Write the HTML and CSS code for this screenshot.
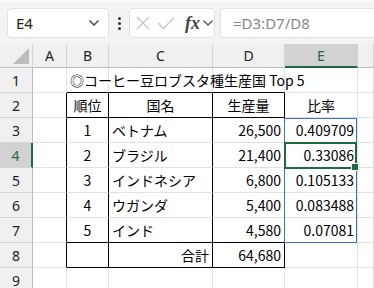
FILE: index.html
```html
<!DOCTYPE html>
<html lang="ja">

<head>
    <meta charset="UTF-8">
    <meta name="viewport" content="width=device-width, initial-scale=1.0">
    <title>コーヒー豆 生産国</title>
    <link rel="stylesheet" href="styles.css">
</head>

<body>

    <div class="toolbar">
        <div class="namebox">
            <span>E4</span>
            <svg class="chev" width="12" height="8" viewBox="0 0 12 8"><path d="M1.5 1.5 L6 6 L10.5 1.5" fill="none" stroke="#444" stroke-width="1.4"/></svg>
        </div>
        <div class="dots"><i></i><i></i><i></i></div>
        <div class="fxbox">
            <svg width="14" height="14" viewBox="0 0 14 14"><path d="M1 1 L13 13 M13 1 L1 13" stroke="#c6c6c6" stroke-width="1.3"/></svg>
            <svg width="18" height="14" viewBox="0 0 18 14"><path d="M1 7 L6.5 12.5 L17 1.5" fill="none" stroke="#c6c6c6" stroke-width="1.3"/></svg>
            <span class="fx">fx</span>
            <svg width="12" height="8" viewBox="0 0 12 8"><path d="M1.5 1.5 L6 6 L10.5 1.5" fill="none" stroke="#555" stroke-width="1.3"/></svg>
        </div>
        <div class="formula">=D3:D7/D8</div>
    </div>

    <div class="sheet">
        <div class="hd corner"><span class="tri"></span></div>
        <div class="hd">A</div>
        <div class="hd">B</div>
        <div class="hd">C</div>
        <div class="hd">D</div>
        <div class="hd sel">E</div>
        <div class="hd"></div>

        <div class="rh">1</div>
        <div class="c"></div>
        <div class="c bb title"><span>◎コーヒー豆ロブスタ種生産国 Top 5</span></div>
        <div class="c bb"></div>
        <div class="c bb"></div>
        <div class="c"></div>
        <div class="c"></div>

        <div class="rh">2</div>
        <div class="c br"></div>
        <div class="c br bb mid">順位</div>
        <div class="c br bb mid">国名</div>
        <div class="c br bb mid">生産量</div>
        <div class="c mid">比率</div>
        <div class="c"></div>

        <div class="rh">3</div>
        <div class="c br"></div>
        <div class="c br mid">1</div>
        <div class="c br">ベトナム</div>
        <div class="c br num">26,500</div>
        <div class="c num">0.409709</div>
        <div class="c"></div>

        <div class="rh rsel">4</div>
        <div class="c br"></div>
        <div class="c br mid">2</div>
        <div class="c br">ブラジル</div>
        <div class="c br num">21,400</div>
        <div class="c num">0.33086</div>
        <div class="c"></div>

        <div class="rh">5</div>
        <div class="c br"></div>
        <div class="c br mid">3</div>
        <div class="c br">インドネシア</div>
        <div class="c br num">6,800</div>
        <div class="c num">0.105133</div>
        <div class="c"></div>

        <div class="rh">6</div>
        <div class="c br"></div>
        <div class="c br mid">4</div>
        <div class="c br">ウガンダ</div>
        <div class="c br num">5,400</div>
        <div class="c num">0.083488</div>
        <div class="c"></div>

        <div class="rh">7</div>
        <div class="c br"></div>
        <div class="c br bb mid">5</div>
        <div class="c br bb">インド</div>
        <div class="c br bb num">4,580</div>
        <div class="c num">0.07081</div>
        <div class="c"></div>

        <div class="rh">8</div>
        <div class="c br"></div>
        <div class="c br bb"></div>
        <div class="c br bb num">合計</div>
        <div class="c br bb num">64,680</div>
        <div class="c"></div>
        <div class="c"></div>

        <div class="rh">9</div>
        <div class="c"></div>
        <div class="c"></div>
        <div class="c"></div>
        <div class="c"></div>
        <div class="c"></div>
        <div class="c"></div>

        <div class="range"></div>
        <div class="active"><span class="handle"></span></div>
    </div>

</body>

</html>
```

FILE: styles.css
```css
body {
    margin: 0;
    width: 374px;
    height: 288px;
    overflow: hidden;
    background-color: #fff;
    font-family: "Noto Sans CJK JP", "Noto Sans", sans-serif;
    color: #000;
}

.toolbar {
    height: 44px;
    background-color: #f3f3f3;
    border-top: 2px solid #fafafa;
    box-sizing: border-box;
    display: flex;
    align-items: center;
    padding-left: 7px;
}

.namebox {
    width: 102px;
    height: 30px;
    box-sizing: border-box;
    background-color: #fff;
    border: 1px solid #e2e2e2;
    border-radius: 4px;
    display: flex;
    align-items: center;
    justify-content: space-between;
    padding: 0 8px 0 8px;
    font-family: "Noto Sans", sans-serif;
    font-size: 15px;
    color: #222;
}

.dots {
    width: 20px;
    display: flex;
    flex-direction: column;
    align-items: center;
    gap: 2px;
}

.dots i {
    width: 3px;
    height: 3px;
    border-radius: 50%;
    background-color: #333;
}

.fxbox {
    width: 86px;
    height: 30px;
    box-sizing: border-box;
    background-color: #fff;
    border: 1px solid #e2e2e2;
    border-radius: 4px;
    display: flex;
    align-items: center;
    gap: 7px;
    padding-left: 6px;
}

.fx {
    font-family: "Liberation Serif", "DejaVu Serif", serif;
    font-style: italic;
    font-weight: bold;
    font-size: 18px;
    color: #444;
    margin-left: 3px;
    margin-right: -5px;
}

.formula {
    flex: 1;
    height: 30px;
    margin-left: 5px;
    box-sizing: border-box;
    background-color: #fff;
    border: 1px solid #e2e2e2;
    border-right: none;
    border-radius: 4px 0 0 4px;
    display: flex;
    align-items: center;
    padding-left: 12px;
    font-family: "Noto Sans", sans-serif;
    font-size: 15px;
    color: #888;
}

.sheet {
    position: relative;
    display: grid;
    grid-template-columns: 33px 34px 42px 104px 72px 73px 16px;
    grid-template-rows: 24px repeat(9, 25px);
}

.hd,
.rh {
    background-color: #f0f0f0;
    border-right: 1px solid #d4d4d4;
    border-bottom: 1px solid #bdbdbd;
    box-sizing: border-box;
    display: flex;
    align-items: center;
    justify-content: center;
    font-family: "Noto Sans", sans-serif;
    font-size: 14px;
    color: #222;
}

.rh {
    border-bottom-color: #d4d4d4;
    border-right-color: #bdbdbd;
}

.corner {
    position: relative;
}

.tri {
    position: absolute;
    right: 3px;
    bottom: 3px;
    width: 0;
    height: 0;
    border-left: 16px solid transparent;
    border-bottom: 16px solid #bdbdbd;
}

.hd.sel {
    background-color: #d2d2d2;
    color: #1e6b41;
    border-bottom: 2px solid #1e6b41;
}

.rh.rsel {
    background-color: #d2d2d2;
    color: #1e6b41;
    border-right: 2px solid #1e6b41;
}

.c {
    border-right: 1px solid #e1e1e1;
    border-bottom: 1px solid #e1e1e1;
    box-sizing: border-box;
    display: flex;
    align-items: center;
    padding: 0 3px;
    font-size: 14px;
    white-space: nowrap;
}

.c.br {
    border-right-color: #000;
}

.c.bb {
    border-bottom-color: #000;
}

.c.mid {
    justify-content: center;
}

.c.num {
    justify-content: flex-end;
}

.title {
    overflow: visible;
    position: relative;
    z-index: 1;
}

.range {
    position: absolute;
    left: 284px;
    top: 74px;
    width: 73px;
    height: 125px;
    box-sizing: border-box;
    border: 1px solid #3a6fd0;
}

.active {
    position: absolute;
    left: 284px;
    top: 98px;
    width: 73px;
    height: 27px;
    box-sizing: border-box;
    border: 2px solid #1e6b41;
}

.handle {
    position: absolute;
    right: -4px;
    bottom: -4px;
    width: 6px;
    height: 6px;
    background-color: #1e6b41;
    border: 1px solid #fff;
}
```
